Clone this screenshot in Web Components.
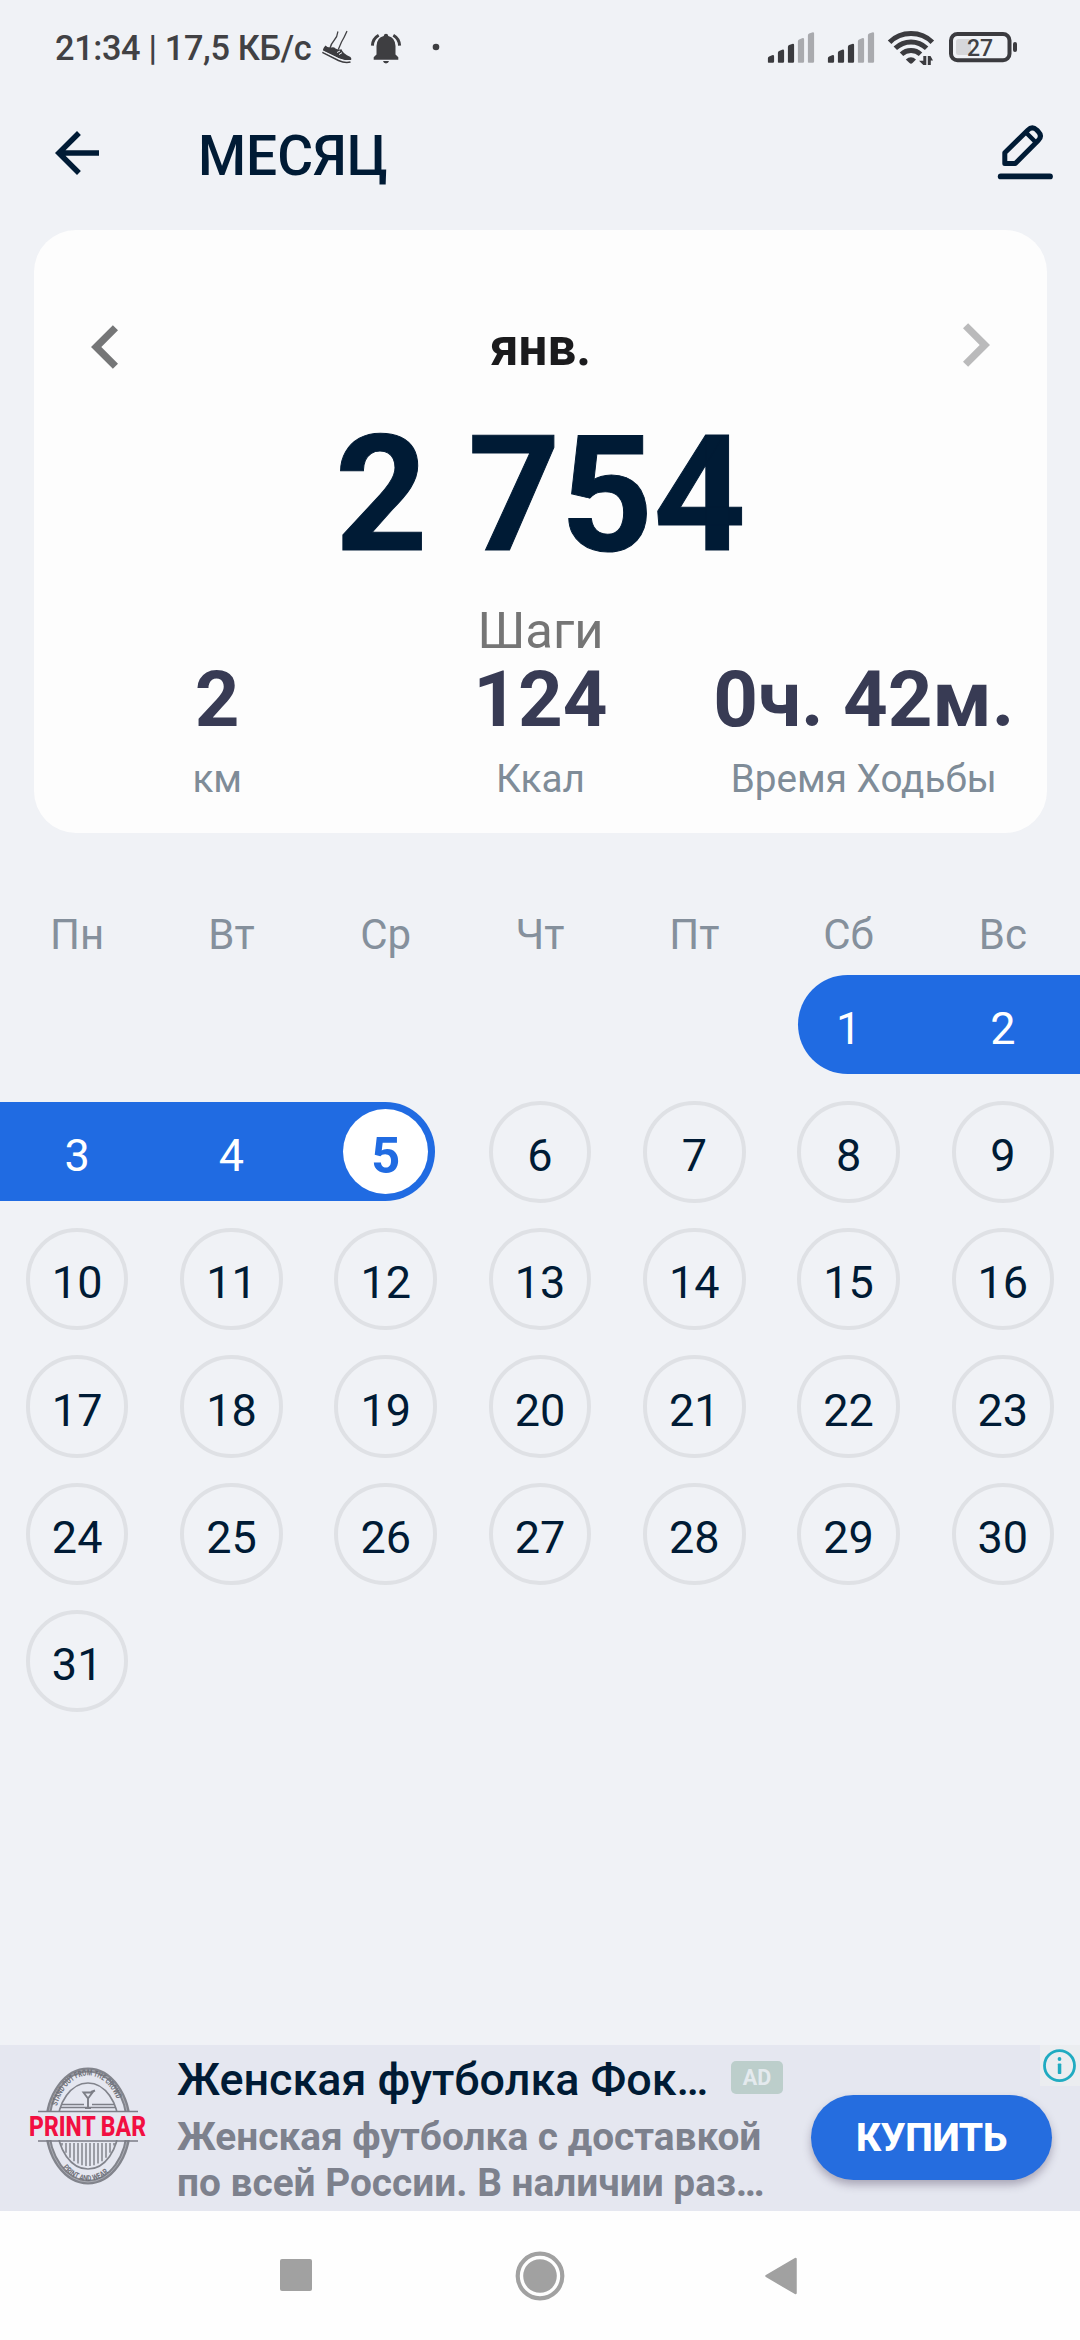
<!DOCTYPE html>
<html lang="ru">
<head>
<meta charset="utf-8">
<title>Месяц</title>
<style>
html,body{margin:0;padding:0}
body{width:1080px;height:2340px;overflow:hidden;background:#f0f2f6;font-family:Roboto,"Liberation Sans",sans-serif;color:#001b35}
</style>
</head>
<body>
<month-screen></month-screen>
<script>
const define = (name, html, setup) => customElements.define(name, class extends HTMLElement {
  constructor() {
    super();
    const t = document.createElement('template');
    t.innerHTML = html;
    this.attachShadow({mode: 'open'}).appendChild(t.content.cloneNode(true));
  }
  connectedCallback() { if (setup) setup.call(this, this.shadowRoot); }
});

const bars = x => [[55,1],[49.5,1],[43.7,1],[38,0],[32.2,0]].map(([y, on], i) => {
  const l = x + i * 10;
  return `<path fill="${on ? '#3b3b3f' : '#a9aaae'}" d="M${l+.4} ${y+3.2}Q${l+.4} ${y+2} ${l+1.6} ${y+1.4}L${l+4.6} ${y+.2}Q${l+6.6} ${y-.4} ${l+6.6} ${y+1.4}V61.4Q${l+6.6} 62.7 ${l+5.4} 62.7H${l+1.4}Q${l} 62.7 ${l+.4} 61.2Z"/>`;
}).join('');

define('status-bar', `
<style>
:host{display:flex;height:96px;align-items:center;box-sizing:border-box;padding:0 61px 0 55px;color:#414144}
.t{font-size:34.3px;font-weight:500;line-height:96px;white-space:pre;width:267px;letter-spacing:-.35px}
svg{display:block}
.r{margin-left:auto}
</style>
<span class="t">21:34 | 17,5 КБ/с</span>
<svg width="120" height="40" viewBox="322 28 120 40">
  <g fill="none" stroke="#414144" stroke-width="1.3" stroke-linecap="round"><path d="M337.800 32Q337.500 36.500 334 40.500Q331 44 330 48"/><path d="M346.800 31.500Q344.500 37 341.500 42L338.500 49"/></g>
  <path fill="#3c3c3f" d="M325.500 45.500Q327.500 48 331 47.500Q334 46.500 335.500 48.500Q338.500 50.200 341.500 49.200Q342.500 53.500 350.500 57Q352 59 351 60.200Q346 61.500 340 59L323.300 51Q322 49.500 325.500 45.500Z"/>
  <path fill="none" stroke="#3c3c3f" stroke-width="1.500" d="M322.300 52.300L338.500 60.500Q345 63.400 350.500 62"/>
  <path stroke="#f0f2f6" stroke-width="1" fill="none" d="M323 51L339 58.800Q345 61.500 351 60.500M337 52.500l3-1.500M339 54.500l3-1.800"/>
  <path fill="#3e3e41" d="M386 33.800Q388 33.800 388.300 36Q395.200 37.600 395.500 46V54.500L398.300 57.300V59.700H373.700V57.300L376.500 54.500V46Q376.800 37.600 383.700 36Q384 33.800 386 33.800ZM383 61H389Q388.500 63.400 386 63.400Q383.500 63.400 383 61Z"/>
  <path fill="none" stroke="#3e3e41" stroke-width="3" d="M378.700 35.200Q372.700 38.500 372.400 45.600M393.300 35.200Q399.300 38.500 399.600 45.600"/>
  <circle cx="436" cy="47" r="3.300" fill="#3e3e41"/>
</svg>
<svg class="r" width="252" height="40" viewBox="767 28 252 40">
  ${bars(767.5)}${bars(827.5)}
  <g fill="none" stroke="#3b3b3f" stroke-width="5">
    <path d="M889.600 42.300Q898 33.500 911 33.500Q924 33.500 932.300 42.300"/>
    <path d="M895.300 48.300Q902 42 911 42Q920 42 926.600 48.300"/>
    <path d="M901.500 54.300Q905.500 50.500 911 50.500Q916.500 50.500 920.500 54.300"/>
  </g>
  <path fill="#3b3b3f" d="M905.800 59.600Q911 55 916 59.600L912.500 63Q911 64.300 909.500 63Z"/>
  <path fill="#3b3b3f" d="M923.300 56H926.300V65H923.300L919 60.700H923.300ZM927.800 65V56H930.500L933 60.500H930.800V65Z"/>
  <rect x="951" y="34" width="58.500" height="26.300" rx="6.500" fill="none" stroke="#3b3b3f" stroke-width="4"/>
  <rect x="956" y="39" width="15" height="16" rx="2.500" fill="#d6d7da"/>
  <rect x="1013" y="42" width="4" height="10" rx="2" fill="#3b3b3f"/>
  <text x="980" y="55.800" text-anchor="middle" font-size="23" font-weight="500" fill="#414144">27</text>
</svg>`);

define('app-bar', `
<style>
:host{display:flex;height:134px;box-sizing:border-box;padding:0 27px 0 44px;align-items:flex-start}
svg{display:block}
.b{margin-top:24px}
h1{margin:0 0 0 88px;padding-top:20px;font-size:55px;font-weight:500;line-height:80px;color:#001b35}
.e{margin:28px 0 0 auto}
</style>
<svg class="b" width="66" height="66" viewBox="0 0 24 24" fill="#001b35"><path d="M20 11H7.830l5.590-5.590L12 4l-8 8 8 8 1.410-1.410L7.830 13H20z"/></svg>
<h1><slot></slot></h1>
<svg class="e" width="56" height="56" viewBox="997 124 56 56" fill="none" stroke="#001b35" stroke-width="5" stroke-linejoin="round">
  <path d="M1004.800 152.800V163.500H1015.300L1038.200 140.600Q1042.700 136 1038.200 131.500L1036.800 130Q1032.200 125.800 1027.700 130.200Z"/>
  <path d="M1026 132.500L1035.500 142" stroke-width="4.500"/>
  <path d="M1000.700 176.400H1050" stroke-width="5.800" stroke-linecap="round"/>
</svg>`);

define('stat-item', `
<style>
:host{display:flex;flex-direction:column;align-items:center;white-space:nowrap}
.v{font-size:78px;line-height:65px;font-weight:700;color:#383b54}
.l{font-size:38.700px;line-height:93px;color:#7f8c98}
</style><div class="v"><slot></slot></div><div class="l"><slot name="label"></slot></div>`);

define('summary-card', `
<style>
:host{display:block;box-sizing:border-box;margin:0 33px 0 34px;height:603px;border-radius:42px;background:#fdfdfd;padding-top:70px;text-align:center}
.nav{display:flex;height:96px;justify-content:space-between;padding:0 57px;align-items:center}
.nav b{font-size:51px;line-height:96px;color:#1b1b1d}
svg{display:block}
.next{margin-bottom:6px}
.prev{margin-bottom:2px}
.num{font-size:161.500px;line-height:198px;font-weight:700;color:#001b35;-webkit-text-stroke:1px #001b35}
.cap{font-size:50.800px;line-height:73px;color:#757575}
.stats{display:grid;grid-template-columns:repeat(3,323.300px);justify-content:center}
</style>
<div class="nav">
<svg class="prev" width="27" height="44" viewBox="8 6 7.410 12" fill="#757677"><path d="M15.410 7.410L14 6l-6 6 6 6 1.410-1.410L10.830 12z"/></svg>
<b><slot name="month"></slot></b>
<svg class="next" width="27" height="44" viewBox="8.590 6 7.410 12" fill="#bababb"><path d="M8.590 16.590L13.170 12 8.590 7.410 10 6l6 6-6 6z"/></svg>
</div>
<div class="num"><slot name="steps"></slot></div>
<div class="cap"><slot name="caption"></slot></div>
<div class="stats"><slot></slot></div>`);

define('calendar-day', `
<style>
:host{display:flex;width:102.500px;height:102.500px;box-sizing:border-box;border-radius:50%;border:4px solid #dfe1e5;align-items:center;justify-content:center;font-size:45px;color:#001b35;justify-self:center;align-self:center;grid-row:1}
span{line-height:60px;padding-top:8px}
:host([done]){border-color:transparent;color:#fff}
:host([today]){width:85px;height:85px;border:0;background:#fff;color:#206be2;font-size:50.500px;font-weight:700}
:host([today]) span{padding-top:9px}
</style><span><slot></slot></span>`);

define('calendar-week', `
<style>
:host{display:grid;grid-template-columns:repeat(7,1fr);grid-template-rows:127.300px}
.band{grid-row:1;height:99px;align-self:center;background:#206be2}
.start{border-radius:50px 0 0 50px;margin-left:26.500px}
.end{border-radius:0 50px 50px 0;margin-right:28px}
</style>`, function (root) {
  const first = +this.getAttribute('first'), col = +this.getAttribute('col') || 1;
  const n = Math.min(8 - col, 32 - first);
  const doneCount = Math.min(n, 5 - first + 1);
  if (doneCount > 0) {
    const band = document.createElement('div');
    band.className = 'band ' + (first === 1 ? 'start' : 'end');
    band.style.gridColumn = `${col} / ${col + doneCount}`;
    root.appendChild(band);
  }
  for (let i = 0; i < n; i++) {
    const d = document.createElement('calendar-day');
    d.textContent = first + i;
    d.style.gridColumn = col + i;
    if (first + i < 5) d.setAttribute('done', '');
    if (first + i === 5) d.setAttribute('today', '');
    root.appendChild(d);
  }
});

define('month-calendar', `
<style>
:host{display:block;padding-top:75px}
.h{display:grid;grid-template-columns:repeat(7,1fr);text-align:center;font-size:42px;line-height:53px;color:#85909c}
</style>
<div class="h"><span>Пн</span><span>Вт</span><span>Ср</span><span>Чт</span><span>Пт</span><span>Сб</span><span>Вс</span></div>
<calendar-week first="1" col="6"></calendar-week>
<calendar-week first="3"></calendar-week>
<calendar-week first="10"></calendar-week>
<calendar-week first="17"></calendar-week>
<calendar-week first="24"></calendar-week>
<calendar-week first="31"></calendar-week>`);

const stripes = Array.from({length: 14}, (_, i) => {
  const x = 62 + i * 4, h = 2126 + 43 * Math.sqrt(1 - Math.pow((x - 88) / 30.5, 2)) - 3;
  return `<path d="M${x} 2143V${h}"/>`;
}).join('');

define('ad-banner', `
<style>
:host{display:flex;height:166px;background:#e5e7f0;box-sizing:border-box;padding:0 28px 0 24px;margin-top:auto;position:relative}
svg{display:block}
.logo{margin-top:20px}
.body{margin-left:25px;width:634px;white-space:nowrap}
.t{display:flex;align-items:center;height:69px;font-size:44.900px;font-weight:500;color:#001b35}
.t span{width:554px}
.ad{width:52px;height:33px;margin-top:-4px;border-radius:5px;background:#bccecb;color:#e4eaee;font-size:21.500px;font-weight:700;line-height:34px;text-align:center}
.d{font-size:38.800px;font-weight:700;line-height:46px;color:#7d818d}
.buy{width:241px;height:85px;margin-top:50px;border:0;padding:0;border-radius:43px;background:#256ddf;color:#fff;font:800 39px/86px Roboto,sans-serif;letter-spacing:-.3px;text-align:center;box-shadow:0 5px 8px rgba(60,50,80,.35)}
.info{position:absolute;right:0;top:0}
</style>
<svg class="logo" width="128" height="122" viewBox="24 2065 128 122">
  <g fill="none" stroke="#82848c">
    <ellipse cx="88" cy="2126" rx="40.500" ry="56" stroke-width="5"/>
    <ellipse cx="88" cy="2126" rx="40.500" ry="56" stroke="#a9abb3" stroke-width="1"/>
    <ellipse cx="88" cy="2126" rx="30.500" ry="43" stroke-width="1.700"/>
    <g stroke-width="1.500">${stripes}</g>
  </g>
  <path fill="#e5e7f0" d="M28 2112H148V2140H28Z"/>
  <g fill="none" stroke="#7c7e86" stroke-width="1.600">
    <path d="M38 2111.500H138M38 2141H138M62 2104.500H84M92 2104.500H114M60 2107.500H116"/>
    <path d="M83.500 2092.500H92.500L88 2098.500ZM88 2098V2107M91 2092L95 2090.500M85 2108H91" stroke-width="1.900"/>
  </g>
  <path id="top" fill="none" d="M57 2106A33 46.500 0 0 1 119 2106"/>
  <path id="bot" fill="none" d="M58 2160A37 50.500 0 0 0 118 2160"/>
  <text font-size="8.500" font-weight="700" fill="#6f7179"><textPath href="#top" textLength="86" lengthAdjust="spacingAndGlyphs">STAND OUT FROM THE CROWD</textPath></text>
  <text font-size="8" font-weight="700" fill="#6f7179"><textPath href="#bot" startOffset="9" textLength="52" lengthAdjust="spacingAndGlyphs">PRINT AND WEAR</textPath></text>
  <text x="29" y="2135.800" font-size="27.500" font-weight="800" fill="#f20f42" textLength="117" lengthAdjust="spacingAndGlyphs">PRINT BAR</text>
</svg>
<div class="body">
  <div class="t"><span>Женская футболка Фок…</span><div class="ad">AD</div></div>
  <div class="d">Женская футболка с доставкой</div>
  <div class="d">по всей России. В наличии раз…</div>
</div>
<button class="buy">КУПИТЬ</button>
<svg class="info" width="40" height="41" viewBox="1040 2045 40 41">
  <path fill="#ebedf0" d="M1040 2045H1080V2086H1040Z"/>
  <circle cx="1059.500" cy="2065.700" r="15" fill="none" stroke="#20abc1" stroke-width="2.800"/>
  <circle cx="1059.500" cy="2059" r="1.900" fill="#20abc1"/><rect x="1057.800" y="2063.500" width="3.500" height="10.500" rx=".8" fill="#20abc1"/>
</svg>`);

define('system-nav', `
<style>
:host{display:flex;height:129px;background:#fefefe;justify-content:space-between;padding:0 283px 0 280px;align-items:flex-start;box-sizing:border-box}
svg{display:block}
</style>
<svg style="margin-top:48px" width="32" height="32"><rect width="32" height="32" rx="2" fill="#a1a1a1"/></svg>
<svg style="margin:40px 0 0 3px" width="50" height="50" viewBox="0 0 50 50"><circle cx="25" cy="25" r="22.300" fill="none" stroke="#a1a1a1" stroke-width="4.200"/><circle cx="25" cy="25" r="16.800" fill="#a1a1a1"/></svg>
<svg style="margin-top:46px" width="32" height="38" viewBox="0 0 32 38"><path d="M1.500 19L30.500 2V36Z" fill="#a1a1a1" stroke="#a1a1a1" stroke-width="2.500" stroke-linejoin="round"/></svg>`);

define('month-screen', `
<style>:host{display:flex;flex-direction:column;height:2340px}</style>
<status-bar></status-bar>
<app-bar>МЕСЯЦ</app-bar>
<summary-card>
  <span slot="month">янв.</span>
  <span slot="steps">2 754</span>
  <span slot="caption">Шаги</span>
  <stat-item>2<span slot="label">км</span></stat-item>
  <stat-item>124<span slot="label">Ккал</span></stat-item>
  <stat-item>0ч. 42м.<span slot="label">Время Ходьбы</span></stat-item>
</summary-card>
<month-calendar></month-calendar>
<ad-banner></ad-banner>
<system-nav></system-nav>`);
</script>
</body>
</html>
